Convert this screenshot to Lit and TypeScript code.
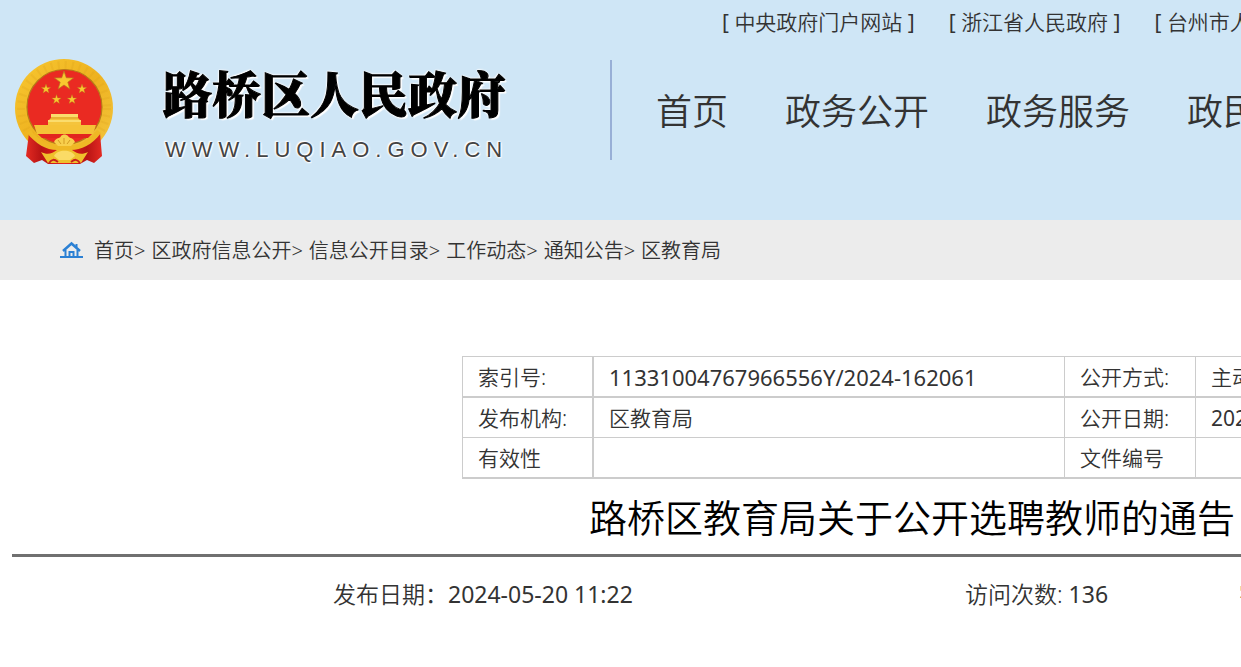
import { LitElement, html, css, svg } from "lit";
import { customElement } from "lit/decorators.js";

const STAR = "M0,-10 L2.3,-3.2 L9.5,-3.1 L3.8,1.2 L5.9,8.1 L0,4 L-5.9,8.1 L-3.8,1.2 L-9.5,-3.1 L-2.3,-3.2 Z";

@customElement("national-emblem")
class NationalEmblem extends LitElement {
  static styles = css`
    :host { display: block; flex: none; width: 100px; height: 108px; }
    .art { display: block; width: 100%; height: 100%; }
  `;
  render() {
    const stars = [
      { x: 50, y: 23, s: 1 },
      { x: 32, y: 31, s: 0.5 },
      { x: 68, y: 31, s: 0.5 },
      { x: 42.5, y: 41.5, s: 0.5 },
      { x: 58, y: 41.5, s: 0.5 },
    ];
    return html`
      <svg class="art" viewBox="0 0 100 108" role="img" aria-label="国徽">
        <defs>
          <linearGradient id="gold" x1="0" y1="0" x2="1" y2="1">
            <stop offset="0" stop-color="#f8c832" />
            <stop offset="0.5" stop-color="#eeb21f" />
            <stop offset="1" stop-color="#f3c640" />
          </linearGradient>
          <linearGradient id="drape" x1="0" y1="0" x2="1" y2="0">
            <stop offset="0" stop-color="#e32a22" />
            <stop offset="0.2" stop-color="#b81414" />
            <stop offset="0.5" stop-color="#e8231e" />
            <stop offset="0.8" stop-color="#b81414" />
            <stop offset="1" stop-color="#e32a22" />
          </linearGradient>
        </defs>
        <circle cx="50" cy="50" r="49" fill="url(#gold)" />
        <circle cx="50" cy="50" r="43" fill="none" stroke="#d99a1a" stroke-width="8" stroke-dasharray="2 5" opacity="0.2" />
        <circle cx="50.500" cy="49" r="37.500" fill="#ea2a22" stroke="#b67a18" stroke-width="1.200" />
        <path d="M15,75 L18,74 C26,85 34,89 45,90 L55,90 C66,89 76,84 83,74 L86,75 L88,98 L80,105 L73,102 L66,106 L34,106 L28,102 L20,105 L12,98 Z" fill="url(#drape)" />
        <path d="M17,72 C27,85 36,87 44,87 L56,87 C65,87 75,83 83,72 L87,75 C78,87 67,92 57,92 L43,92 C32,92 22,86 13,75 Z" fill="#efb825" />
        <path d="M20,67 H82 L79,76 H23 Z" fill="#f5c237" />
        <path d="M37,56 H64 V60 L67,63 V67 H34 V63 L37,60 Z" fill="#f5c43c" />
        <path d="M37,56 H64 V59 H37 Z M34,62 H67 V64 H34 Z" fill="#fbdc6c" />
        <path d="M37,60 H64" stroke="#dba12a" stroke-width="1" />
        <path d="M24,76 H78 L74,80 H28 Z" fill="#e2241f" />
        <path d="M40,84 C42,79 46,81 47,78 C49,76 52,76 54,78 C56,81 59,79 61,84 L57,88 H44 Z" fill="#f8cf4c" />
        <path d="M50,86 V80 M47,86 L44,82 M53,86 L56,82" stroke="#d39a22" stroke-width="1" />
        <path d="M27,94 C33,97 38,96 43,92 H58 C63,96 68,97 74,94 L67,105 H34 Z" fill="#efc02c" />
        <path d="M40,98 C43,91 58,91 61,98 L56,102 H45 Z" fill="#fadb66" />
        <path d="M35,105 C38,101 40,101 44,104 M66,105 C63,101 61,101 57,104" fill="none" stroke="#c8211b" stroke-width="2" />
        ${stars.map((t) => svg`<path d=${STAR} fill="#f9c72f" stroke="#b8741c" stroke-width="0.7" transform="translate(${t.x} ${t.y}) scale(${t.s})" />`)}
      </svg>
    `;
  }
}

@customElement("app-root")
class AppRoot extends LitElement {
  static styles = css`
    :host {
      display: block;
      overflow: hidden;
      min-height: 100vh;
      background: #fff;
      color: #333;
      font-family: "Noto Sans", "Noto Sans CJK SC", sans-serif;
      font-size: 21px;
      font-weight: 350;
    }
    a { color: inherit; text-decoration: none; white-space: nowrap; }
    .header { display: flex; height: 220px; background: #cfe6f6; }
    .brand { display: flex; flex: none; align-items: flex-start; gap: 49px; width: 610px; padding: 58px 0 0 14px; box-sizing: border-box; }
    .names { display: flex; flex-direction: column; padding-top: 4px; }
    .name {
      margin: 0;
      color: #000;
      font: 900 49px/60px "Noto Serif CJK SC", "Noto Sans CJK SC", serif;
      white-space: nowrap;
      -webkit-text-stroke: 1px #000;
      text-shadow: 0 0 3px #fff, 0 0 3px #fff, 2px 2px 1px #fff, -1px -1px 1px #fff;
    }
    .domain {
      padding: 12px 0 0 2px;
      color: #444;
      font: 22px/32px "Liberation Sans", sans-serif;
      letter-spacing: 6px;
      text-shadow: 0 0 3px #fff, 0 0 3px #fff, 1px 1px 1px #fff, -1px -1px 1px #fff;
    }
    .menus { display: flex; flex: none; flex-direction: column; }
    .portals { display: flex; gap: 34px; padding-left: 112px; height: 60px; line-height: 44px; }
    .nav {
      display: flex; gap: 57px; height: 100px; padding-left: 44px;
      border-left: 2px solid #98afd6;
      font-size: 36px; line-height: 104px;
    }
    .crumbs { display: flex; align-items: center; height: 60px; padding-left: 60px; background: #ececec; font-size: 20px; line-height: 60px; }
    .crumbs a, .crumb { padding-top: 1px; }
    .home { display: block; width: 23px; height: 18px; margin-right: 11px; }
    .crumb { margin-right: 6px; }
    .article { width: 1800px; margin-left: 12px; padding-top: 76px; }
    .info { margin-left: 450px; border-collapse: separate; border-spacing: 0; border: solid #ccc; border-width: 1px 0 0 1px; table-layout: fixed; width: 1205px; }
    .info th, .info td {
      height: 40px; padding: 0 0 0 15px; box-sizing: border-box;
      border: solid #ccc; border-width: 0 1px 1px 0;
      text-align: left; line-height: 38px; font-weight: 350; white-space: nowrap;
    }
    .info th:first-child { border-right-width: 2px; }
    .info tr:nth-child(odd) > * { border-bottom-width: 2px; height: 41px; }
    .c-label { width: 131px; }
    .c-value { width: 471px; }
    .info .num { font-size: 22px; }
    .latin { font-weight: 400; }
    .title { margin: 0; padding: 7px 0 5px; border-bottom: 3px solid #707070; color: #000; font-size: 38px; line-height: 63px; text-align: center; font-weight: 350; }
    .meta { display: grid; grid-template-columns: 632px 274px auto; padding: 18px 0 0 321px; font-size: 23px; line-height: 38px; white-space: nowrap; }
  `;

  private portals = ["中央政府门户网站", "浙江省人民政府", "台州市人民政府"];
  private nav = ["首页", "政务公开", "政务服务", "政民互动"];
  private crumbs = ["首页", "区政府信息公开", "信息公开目录", "工作动态", "通知公告"];

  render() {
    return html`
      <header class="header">
        <div class="brand">
          <national-emblem></national-emblem>
          <div class="names">
            <p class="name">路桥区人民政府</p>
            <span class="domain">WWW.LUQIAO.GOV.CN</span>
          </div>
        </div>
        <div class="menus">
          <div class="portals">${this.portals.map((p) => html`<a href="#"><span class="latin">[ </span>${p}<span class="latin"> ]</span></a>`)}</div>
          <nav class="nav">${this.nav.map((n) => html`<a href="#">${n}</a>`)}</nav>
        </div>
      </header>
      <nav class="crumbs" aria-label="当前位置">
        <svg class="home" viewBox="0 0 23 18" fill="none" stroke="#2b80d4" aria-hidden="true">
          <path d="M0,16 H23" stroke-width="2" />
          <path d="M3,10 L11.500,2.500 L20,10" stroke-width="2.500" />
          <path d="M5.500,9 V16 M17.500,9 V16 M9.500,16 V11 H13.500 V16 M16.500,3 V6" stroke-width="2" />
        </svg>
        ${this.crumbs.map((c) => html`<span class="crumb"><a href="#">${c}</a>&gt;</span>`)}
        <a href="#">区教育局</a>
      </nav>
      <main class="article">
        <table class="info">
          <colgroup><col class="c-label" /><col class="c-value" /><col class="c-label" /><col class="c-value" /></colgroup>
          <tbody>
            <tr><th>索引号:</th><td class="num"><span class="latin">11331004767966556Y/2024-162061</span></td><th>公开方式:</th><td>主动公开</td></tr>
            <tr><th>发布机构:</th><td>区教育局</td><th>公开日期:</th><td><span class="latin">2024-05-20</span></td></tr>
            <tr><th>有效性</th><td></td><th>文件编号</th><td></td></tr>
          </tbody>
        </table>
        <h1 class="title">路桥区教育局关于公开选聘教师的通告</h1>
        <div class="meta">
          <span>发布日期：<span class="latin">2024-05-20 11:22</span></span>
          <span>访问次数: <span class="latin">136</span></span>
          <span>字体：</span>
        </div>
      </main>
    `;
  }
}
